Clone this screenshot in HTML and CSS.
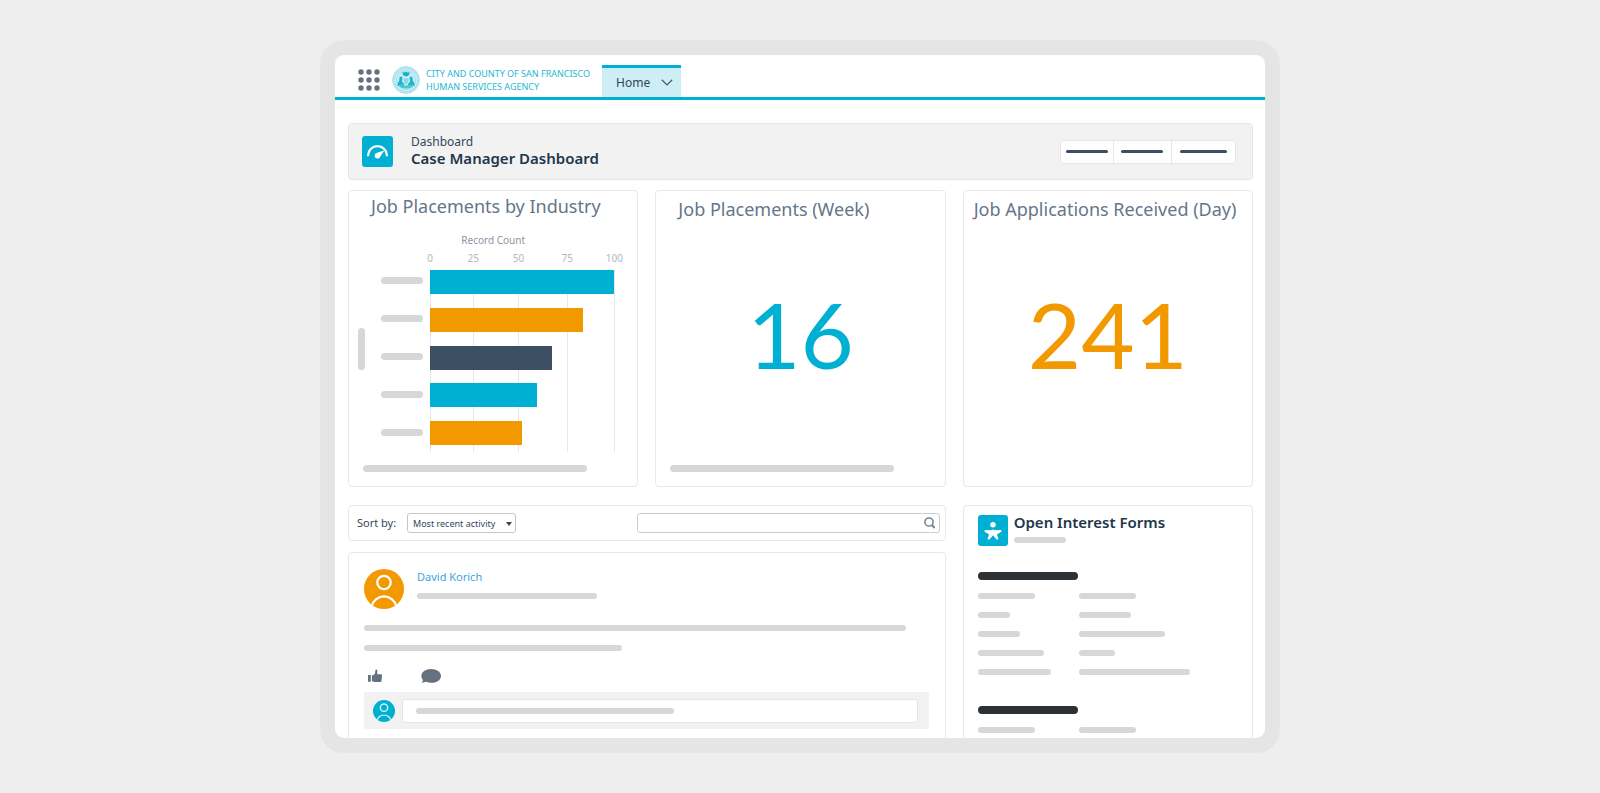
FILE: index.html
```html
<!DOCTYPE html>
<html lang="en">
<head>
<meta charset="utf-8">
<title>Case Manager Dashboard</title>
<link rel="stylesheet" href="styles.css">
</head>
<body>
<div class="device">
  <header class="topbar">
    <button class="launcher" type="button" aria-label="App launcher">
      <svg width="22" height="22" viewBox="0 0 22 22" fill="#65717f"><circle cx="3" cy="3" r="2.700"/><circle cx="11" cy="3" r="2.700"/><circle cx="19" cy="3" r="2.700"/><circle cx="3" cy="11" r="2.700"/><circle cx="11" cy="11" r="2.700"/><circle cx="19" cy="11" r="2.700"/><circle cx="3" cy="19" r="2.700"/><circle cx="11" cy="19" r="2.700"/><circle cx="19" cy="19" r="2.700"/></svg>
    </button>
    <svg class="seal" width="28" height="28" viewBox="0 0 28 28" fill="none">
      <circle cx="14" cy="14" r="13.400" fill="#d6f2f7" stroke="#8fdae8" stroke-width=".8"/>
      <circle cx="14" cy="14" r="11.700" stroke="#8fdae8" stroke-width="1.800" stroke-dasharray="1.300 1"/>
      <circle cx="14" cy="14" r="9.700" fill="#c3ecf3" stroke="#8fdae8" stroke-width=".7"/>
      <path d="M10.200 5.700l1.900 1.100 1.900-1.400 1.900 1.400 1.900-1.100-.9 3.400-1.600 1.100h-2.600l-1.600-1.100z" fill="#12b1cf"/>
      <path d="M11 11.700h6v3.600c0 2-1.400 3.200-3 3.800-1.600-.6-3-1.800-3-3.800z" fill="#8ddbe9" stroke="#eefafc" stroke-width=".6"/>
      <path d="M7.600 10.900l2.300-.5.600 2.200-.7 2.700 2.400 3.100-1.200 1.600-6-.3 1.200-3.500 1-1.300zM20.400 10.900l-2.300-.5-.6 2.200.7 2.700-2.400 3.100 1.200 1.600 6-.3-1.200-3.500-1-1.300z" fill="#1fb2ce"/>
      <path d="M5.800 19q4.200-1.200 8.200.8 4-2 8.200-.8-2.800 3.500-8.200 3.500T5.800 19z" fill="#4cc4da"/>
    </svg>
    <div class="agency">CITY AND COUNTY OF SAN FRANCISCO<br>HUMAN SERVICES AGENCY</div>
    <a class="tab" href="#home">Home
      <svg width="12" height="7" viewBox="0 0 12 7" fill="none" stroke="#4a5766" stroke-width="1.200"><path d="M.8.8L6 5.900 11.200.8"/></svg>
    </a>
  </header>

  <main class="content">
    <section class="page-head">
      <svg class="tile" width="31" height="31" viewBox="0 0 31 31">
        <rect width="31" height="31" rx="3" fill="#00b0d2"/>
        <path d="M6.100 20.200v-1a9.400 9 0 0 1 18.800 0v1" fill="none" stroke="#fff" stroke-width="2.200"/>
        <path d="M22.300 14.400l-4 6a2.900 2.900 0 1 1-3.200-3.600z" fill="#fff"/>
      </svg>
      <div class="headings">
        <p class="kicker">Dashboard</p>
        <h1 class="heading">Case Manager Dashboard</h1>
      </div>
      <div class="actions">
        <button class="action" type="button" aria-label="Action 1"><span class="dash"></span></button>
        <button class="action" type="button" aria-label="Action 2"><span class="dash"></span></button>
        <button class="action" type="button" aria-label="Action 3"><span class="dash dash-wide"></span></button>
      </div>
    </section>

    <section class="metrics">
      <article class="card metric metric-chart">
        <h2 class="metric-title">Job Placements by Industry</h2>
        <div class="chart-name">Record Count</div>
        <div class="chart">
          <span class="bar-ghost axis-title"></span>
          <div class="rows">
            <div class="row"><span class="bar-ghost"></span></div>
            <div class="row"><span class="bar-ghost"></span></div>
            <div class="row"><span class="bar-ghost"></span></div>
            <div class="row"><span class="bar-ghost"></span></div>
            <div class="row"><span class="bar-ghost"></span></div>
          </div>
          <div class="plot">
            <div class="tick" style="left:0%"><span class="tick-label">0</span></div>
            <div class="tick" style="left:23.500%"><span class="tick-label">25</span></div>
            <div class="tick" style="left:48%"><span class="tick-label">50</span></div>
            <div class="tick" style="left:74.500%"><span class="tick-label">75</span></div>
            <div class="tick" style="left:100%"><span class="tick-label">100</span></div>
            <div class="bar teal" style="width:100%"></div>
            <div class="bar amber" style="width:83%"></div>
            <div class="bar slate" style="width:66%"></div>
            <div class="bar teal" style="width:58%"></div>
            <div class="bar amber" style="width:50%"></div>
          </div>
        </div>
        <span class="bar-ghost metric-foot"></span>
      </article>
      <article class="card metric">
        <h2 class="metric-title">Job Placements (Week)</h2>
        <p class="figure teal-text">16</p>
        <span class="bar-ghost metric-foot"></span>
      </article>
      <article class="card metric">
        <h2 class="metric-title metric-title-long">Job Applications Received (Day)</h2>
        <p class="figure amber-text">241</p>
      </article>
    </section>

    <section class="lower">
      <div class="feed">
        <form class="card filter">
          <label class="sort-label" for="sort">Sort by:</label>
          <span class="select-wrap">
            <select id="sort" class="sort"><option>Most recent activity</option></select>
            <svg class="caret" width="6" height="4" viewBox="0 0 6 4"><path d="M0 0h6L3 4z" fill="#34465a"/></svg>
          </span>
          <span class="search-wrap">
            <input class="search" type="text" aria-label="Search feed">
            <svg class="lens" width="11" height="12" viewBox="0 0 11 12" fill="none" stroke="#738191"><circle cx="5" cy="5" r="4.100" stroke-width="1.500"/><path d="M8 8l2.800 3" stroke-width="2"/></svg>
          </span>
        </form>

        <article class="card post">
          <div class="author">
            <svg width="40" height="40" viewBox="0 0 40 40"><defs><clipPath id="disc"><circle cx="20" cy="20" r="20"/></clipPath></defs><g clip-path="url(#disc)"><rect width="40" height="40" fill="#f39900"/><g fill="none" stroke="#fff" stroke-width="2.200"><circle cx="20" cy="13.500" r="6.700"/><path d="M7.500 37.500a12.800 12.800 0 0 1 25 0"/></g></g></svg>
            <div class="author-info">
              <a class="name" href="#david-korich">David Korich</a>
              <span class="line w-meta"></span>
            </div>
          </div>
          <span class="line w-full"></span>
          <span class="line w-half"></span>
          <div class="reactions">
            <button class="icon-btn" type="button" aria-label="Like"><svg width="14" height="14" viewBox="0 0 14 14" fill="#65717f"><path d="M0 6h2.800v6.800H0zM3.900 6.200h1.400c1.100-.7 1.700-1.500 1.900-2.600L7.400 1.200C7.500.3 9.300.2 9.300 1.900V5.300h3.300c1 0 1.500.7 1.400 1.500l-.4 4.700c-.1.900-.8 1.600-1.800 1.600H6.300L3.900 12z"/></svg></button>
            <button class="icon-btn" type="button" aria-label="Comment"><svg width="20" height="14" viewBox="0 0 20 14" fill="#65717f"><path d="M10.200 0C15.800 0 20 2.900 20 6.900s-4.200 6.900-9.800 6.900c-1.800 0-3.500-.4-5-1L.6 14c1-.8 1.300-1.900 1.200-3.200C.8 9.700.4 8.300.4 6.900.4 2.900 4.600 0 10.200 0z"/></svg></button>
          </div>
          <div class="reply">
            <svg width="22" height="22" viewBox="0 0 40 40"><g clip-path="url(#disc)"><rect width="40" height="40" fill="#00b0d2"/><g fill="none" stroke="#d4f1f7" stroke-width="2.600"><circle cx="20" cy="14" r="6.700"/><path d="M7.500 37.500a12.800 12.800 0 0 1 25 0"/></g></g></svg>
            <span class="reply-wrap">
              <input class="reply-input" type="text" aria-label="Write a comment">
              <span class="line reply-line"></span>
            </span>
          </div>
        </article>
      </div>

      <aside class="card forms">
        <div class="forms-head">
          <svg class="tile" width="30" height="31" viewBox="0 0 30 31"><rect width="30" height="31" rx="3" fill="#00b0d2"/><g fill="#fff"><circle cx="15" cy="9.700" r="2.700"/><path d="M6.800 15.100l6.400.1q1.800-1.400 3.600 0l6.400-.1.400 1.400-4.700 2.900 1.600 4.700-1.700.6-3.800-4.400-3.800 4.400-1.700-.6 1.600-4.700-4.700-2.900z"/></g></svg>
          <div>
            <h2 class="forms-title">Open Interest Forms</h2>
            <span class="line w-52"></span>
          </div>
        </div>
        <span class="strong-line"></span>
        <div class="pairs">
          <span class="line w-57"></span><span class="line w-57"></span>
          <span class="line w-32"></span><span class="line w-52"></span>
          <span class="line w-42"></span><span class="line w-86"></span>
          <span class="line w-66"></span><span class="line w-36"></span>
          <span class="line w-73"></span><span class="line w-111"></span>
        </div>
        <span class="strong-line"></span>
        <div class="pairs">
          <span class="line w-57"></span><span class="line w-57"></span>
        </div>
      </aside>
    </section>
  </main>
</div>
</body>
</html>
```
FILE: styles.css
```css
* { box-sizing: border-box; }

body {
  margin: 0;
  height: 100vh;
  padding: 40px 20%;
  background: #eee;
  color: #34465a;
  font-family: "Noto Sans", "Open Sans", sans-serif;
  overflow: hidden;
}

h1, h2, p { margin: 0; font-weight: 400; }
svg { display: block; flex: none; }
button, input, select { font: inherit; color: inherit; margin: 0; }

.device {
  height: 100%;
  border: 15px solid #e5e5e5;
  border-radius: 24px;
  background: #fff;
  overflow: hidden;
}

/* Top bar */
.topbar {
  display: flex;
  align-items: center;
  height: 45px;
  padding: 7px 23px 0;
  border-bottom: 3px solid #00b0d2;
}
.launcher, .icon-btn { padding: 0; border: 0; background: none; }
.seal { margin: 0 6px 0 12px; }
.agency {
  font-size: 9px;
  line-height: 13px;
  color: #22b8d4;
  white-space: nowrap;
}
.tab {
  display: flex;
  align-items: center;
  justify-content: space-between;
  align-self: flex-end;
  width: 79px;
  height: 32px;
  margin-left: 12px;
  padding: 0 8px 0 14px;
  border-top: 3px solid #00b0d2;
  background: #cdeef5;
  color: #34465a;
  font-size: 12px;
  text-decoration: none;
}

/* Page header */
.content { padding: 23px 12px 0 13px; }
.page-head {
  display: flex;
  align-items: center;
  height: 57px;
  padding: 0 16px 0 13px;
  border: 1px solid #e6e6e6;
  border-radius: 4px;
  background: #f2f2f2;
}
.headings { margin: 0 auto 0 18px; padding-bottom: 2px; }
.kicker { font-size: 12px; line-height: 16px; }
.heading {
  font-size: 15px;
  line-height: 17px;
  font-weight: 600;
  color: #22364b;
}
.actions {
  display: flex;
  border: 1px solid #e6e6e6;
  border-radius: 4px;
  background: #fff;
  overflow: hidden;
}
.action {
  display: flex;
  align-items: center;
  height: 22px;
  padding: 0 5px;
  border: 0;
  border-right: 1px solid #e6e6e6;
  background: none;
}
.action + .action { padding: 0 8px 0 7px; }
.action:last-child { padding: 0 8px; border-right: 0; }
.dash { width: 42px; height: 3px; border-radius: 2px; background: #3b4e62; }
.dash-wide { width: 47px; }

/* Shared pieces */
.card { border: 1px solid #e8e8e8; border-radius: 4px; background: #fff; }
.bar-ghost { display: block; height: 7px; border-radius: 4px; background: #d7d7d7; }
.line { display: block; height: 6px; border-radius: 3px; background: #d7d7d7; }
.teal { background: #00b0d2; }
.amber { background: #f39900; }
.slate { background: #3b4e62; }
.teal-text { color: #00b0d2; }
.amber-text { color: #f39900; }

/* Metric cards */
.metrics {
  display: grid;
  grid-template-columns: repeat(3, 1fr);
  gap: 17px;
  margin-top: 10px;
}
.metric { display: flex; flex-direction: column; padding: 6px 0 14px; }
.metric-chart { padding-top: 3px; }
.metric-title {
  padding-left: 22px;
  font-size: 18px;
  line-height: 24px;
  color: #65758a;
  white-space: nowrap;
}
.metric-title-long { padding-left: 10px; }
.metric-foot { width: 224px; margin: auto 0 0 14px; }
.figure {
  margin-top: 61px;
  font-family: Lato, sans-serif;
  font-size: 92px;
  line-height: 104px;
  text-align: center;
}
.chart-name {
  margin-top: 15px;
  font-size: 10px;
  line-height: 14px;
  text-align: center;
  color: #8a95a3;
}
.chart {
  display: flex;
  margin: 23px 23px 13px 9px;
}
.axis-title { width: 7px; height: 42px; margin: 58px 16px 0 0; }
.rows, .plot {
  display: flex;
  flex-direction: column;
  justify-content: space-between;
  height: 182px;
  padding-bottom: 7px;
}
.rows { height: 180px; margin-right: 7px; }
.row { display: flex; align-items: center; height: 21px; }
.row .bar-ghost { width: 42px; }
.plot { position: relative; flex: 1; }
.bar { position: relative; height: 24px; }
.tick {
  position: absolute;
  top: 0;
  bottom: 0;
  width: 1px;
  background: #e6e6e6;
}
.tick-label {
  position: absolute;
  bottom: 100%;
  left: -20px;
  width: 40px;
  padding-bottom: 5px;
  font-size: 10px;
  line-height: 14px;
  text-align: center;
  color: #b3b8bf;
}

/* Lower area */
.lower {
  display: grid;
  grid-template-columns: repeat(3, 1fr);
  gap: 17px;
  margin-top: 18px;
}
.feed { grid-column: span 2; }
.filter {
  display: flex;
  align-items: center;
  height: 36px;
  padding: 0 5px 0 8px;
}
.sort-label { width: 50px; font-size: 11px; line-height: 16px; }
.select-wrap, .search-wrap, .reply-wrap { position: relative; display: flex; }
.sort {
  width: 109px;
  height: 20px;
  padding: 0 5px;
  border: 1px solid #c6c6c6;
  border-radius: 3px;
  background: #fff;
  appearance: none;
  font-size: 9px;
}
.caret { position: absolute; right: 4px; top: 9px; pointer-events: none; }
.search-wrap { width: 52%; margin-left: auto; }
.search {
  width: 100%;
  height: 20px;
  padding: 0 24px 0 6px;
  border: 1px solid #cdcdcd;
  border-radius: 3px;
  font-size: 11px;
}
.lens { position: absolute; right: 5px; top: 4px; }

.post { margin-top: 11px; padding: 16px 16px 40px 15px; }
.author { display: flex; gap: 13px; margin-bottom: 16px; }
.name {
  display: block;
  margin-bottom: 8px;
  font-size: 11px;
  line-height: 16px;
  color: #3ea5dc;
  text-decoration: none;
}
.w-meta { width: 180px; }
.w-full { width: 96%; }
.w-half { width: 258px; margin-top: 14px; }
.reactions { display: flex; gap: 39px; padding: 18px 4px 9px; }
.reply {
  display: flex;
  align-items: center;
  gap: 7px;
  height: 37px;
  padding: 0 11px 0 9px;
  border-radius: 2px;
  background: #f2f2f2;
}
.reply-wrap { flex: 1; }
.reply-input {
  width: 100%;
  height: 24px;
  padding: 0 14px;
  border: 1px solid #e6e6e6;
  border-radius: 3px;
  background: #fff;
  font-size: 11px;
}
.reply-line { position: absolute; left: 14px; top: 9px; width: 50%; pointer-events: none; }

.forms { padding: 9px 14px 40px; }
.forms-head { display: flex; gap: 6px; margin-bottom: 26px; }
.forms-title {
  margin-bottom: 8px;
  font-size: 15px;
  line-height: 14px;
  font-weight: 600;
  color: #22364b;
}
.strong-line { display: block; width: 100px; height: 8px; border-radius: 4px; background: #2c3136; }
.pairs {
  display: grid;
  grid-template-columns: 100px 1fr;
  gap: 13px 1px;
  margin: 13px 0 31px;
}
.w-32 { width: 32px; }
.w-36 { width: 36px; }
.w-42 { width: 42px; }
.w-52 { width: 52px; }
.w-57 { width: 57px; }
.w-66 { width: 66px; }
.w-73 { width: 73px; }
.w-86 { width: 86px; }
.w-111 { width: 111px; }
```
